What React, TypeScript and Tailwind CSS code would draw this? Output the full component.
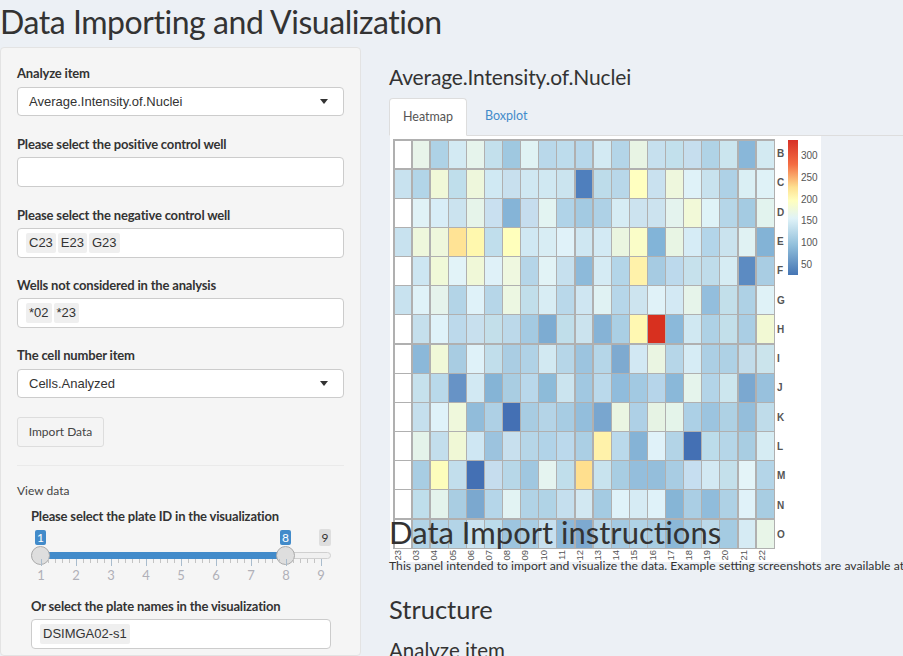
const HEAT: string[][] = [
  ['fff', 'e8f4ea', 'aed2e6', 'd3eaf3', 'e6f4ec', 'c3e0ec', '9fc8e0', 'e0f3f4', 'b9d8ea', 'bddcec', 'b7d7ea', 'd3eaf3', 'b4d5e8', 'e8f4e4', 'c6e0ee', 'c2e0ec', 'c6deee', 'b0d3e6', 'cbe5ee', '89b7d9', 'd3eaf2'],
  ['c8e2ef', 'b2d5e8', 'f0f8d8', 'bfdeeb', 'eef7dc', 'd0e9f3', 'c8e0ee', 'd0e8f2', 'd0e8f2', 'cbe4ef', '4f7fbd', 'bddcea', 'b8d7e9', 'ffffc0', 'c9e1ef', 'eef7dd', 'dff2f8', 'c8e2ee', 'aed1e6', 'daeff4', 'dff2f7'],
  ['fff', 'e0f2f6', 'd8edf7', 'cbe3ef', 'e6f4ea', 'c9e0f0', '85b4d7', 'c6ddee', 'e3f4f2', 'b0d3e8', 'a3cae2', 'aed1e6', 'd6ecf4', 'cce3ef', 'cce3ef', 'e4f3ee', 'f2f9d8', 'dff3f7', 'b5d6e8', 'a4cbe2', 'e2f3ee'],
  ['c8e2ef', 'eef7dc', 'eef7dc', 'ffe395', 'fff8ae', 'c0deec', 'ffffbc', 'd0e8f3', 'd8edf4', 'e0f2f9', 'cfe7f2', 'd3eaf4', 'eaf5e0', 'fafdc8', '82b4d8', 'e8f5e4', 'd6ecf6', 'b3d5e9', 'cae3ee', 'e0f2f3', '83b3d6'],
  ['fff', 'cde6f2', 'f0f9d8', 'e2f3f8', 'f0f8d8', 'dff1f8', 'eff8e0', 'b5d5e8', 'e2f3f6', 'c6e0ee', '8dbada', 'd5ebf4', 'b3d5e8', 'fff2aa', 'a6cbe2', 'bcd9ec', 'c6e1ec', 'bfdcea', 'd6ecf3', '5c8bc2', 'a9cde3'],
  ['c8e2ef', 'dff2f8', 'e5f3ec', 'b3d4e7', 'dff2f9', 'b6d6e8', 'ecf7e2', 'c1deea', 'd8edf4', 'b9d8ea', 'cfe6f2', 'e0f2f3', 'b6d6e9', 'cde4ef', 'e0f2f8', 'd3e9f4', 'e6f4ea', '93bedd', 'c2dfea', 'aed1e5', 'dff2f7'],
  ['fff', 'c5dfec', 'dff2f9', 'bcd9eb', 'c8e0ee', 'c3dfea', 'bcd9ea', 'a4cae2', '7dacd2', 'c0deea', 'cbe3ee', '86b3d6', 'aacfe4', 'fff8b2', 'd8301f', '8bb9da', 'd0e8f2', 'aed1e5', 'c2dfea', 'aacee4', 'f2f9d4'],
  ['fff', '8bb8d9', 'f0f8d8', 'a8cce2', 'dff2f9', 'c1deeb', 'aacde3', 'b0d2e6', 'd2e9f2', 'b6d6e8', '9cc4df', 'b5d6e8', '7eaad0', 'd2e8f3', 'eaf5e2', 'b6d6e8', 'd6ecf5', 'accfe4', 'aed1e5', 'c2dcea', 'cbe4ec'],
  ['fff', 'c6e1ec', 'b9d9ea', '6793c6', 'd2e9f3', '85b4d6', 'a9cde2', 'b9d8eb', '8dbbd9', 'cbe4ef', 'a1c8e1', 'bad9eb', '90bcdc', 'a2c9e2', 'b6d5ea', '8ab8d9', 'e5f4ec', 'b3d4e8', 'cce6ee', '7ba8d0', '98c1dd'],
  ['fff', 'c5dfed', 'dff2f9', 'eff8dc', '91bcda', 'aed0e5', '4470b4', 'a8cce2', 'b4d4e7', 'a7cce3', '93bedc', '79a6cf', 'eaf5e2', 'aed0e6', 'e6f3e4', 'e4f4ea', 'acd0e6', '9cc4df', 'aed1e4', '94bedb', 'bfdcea'],
  ['fff', 'e4f3ea', 'c3deec', 'f0f8d6', 'cfe7f3', '9cc3de', 'c8e0ee', 'b6d6e8', 'b1d3e8', 'bbd9ec', 'abcfe4', 'fff2aa', 'bad9eb', '85b3d6', 'e0f2f9', 'b3d4e7', '4470b4', 'bcdcea', 'b5d6e8', 'a8cde2', 'd6ecf3'],
  ['fff', 'a8cde3', 'fdfdbc', 'c2deec', '4470b4', 'c6ddee', 'b7d7e8', 'a0c7e0', 'e5f4f0', 'c0deeb', 'ffdf8e', 'c8e3ee', 'a8cde2', '94bedc', '94bedb', 'a8cce3', 'c6def0', 'd3e9f3', 'c4e0eb', 'e4f4f8', 'b4d5e8'],
  ['fff', 'bfdeeb', 'e4f3ec', 'a9cde2', '7ba8cf', 'b5d6e9', 'e2f3f3', 'b1d3e6', 'b0d3e6', 'c5dfee', 'd2e8f2', 'a4cbe2', 'dff2f9', 'd6ebf4', 'dff2f9', '86b5d6', 'aacee4', '90bcdb', 'aed1e5', 'e0f2f9', 'a8cde2'],
  ['fff', 'b3d4e7', 'b3d4e7', 'b3d4e7', 'cbe3f0', 'bcdcec', '9dc5df', 'a9cde3', 'c7e0ef', '8db9da', '7da9d0', 'b7d6e8', 'a4cae2', 'b0d3e6', 'a8cde3', '8bb8d8', 'a5cbe2', 'bcd9ea', 'a4cbe2', 'd6ebf4', 'e8f5e8'],
];

const ROWS = ['B', 'C', 'D', 'E', 'F', 'G', 'H', 'I', 'J', 'K', 'L', 'M', 'N', 'O'];
const COLS = ['23', '03', '04', '05', '06', '07', '08', '09', '10', '11', '12', '13', '14', '15', '16', '17', '18', '19', '20', '21', '22'];
const LEGEND = ['300', '250', '200', '150', '100', '50'];
const STEPS = [1, 2, 3, 4, 5, 6, 7, 8, 9];

const SANS = "font-['Lato','Noto_Sans',sans-serif]";
const ARIAL = "font-['Liberation_Sans',Arial,sans-serif]";

function Label({ children }: { children: string }) {
  return <div className="text-[13px] tracking-[-0.18px] leading-[18px] font-bold text-[#333] whitespace-nowrap">{children}</div>;
}

// selectize style box, chips or a single value
function SelectBox({ value }: { value: string }) {
  return (
    <div className={`mt-[5px] h-[29px] flex items-center justify-between pl-[11px] pr-[15px] bg-white border border-[#ccc] rounded-[4px] text-[13px] text-[#333] ${ARIAL}`}>
      <span>{value}</span>
      <svg width="8" height="5" viewBox="0 0 8 5"><path d="M0 0h8L4 5z" fill="#333" /></svg>
    </div>
  );
}

function ChipBox({ chips }: { chips: string[] }) {
  return (
    <div className={`mt-[4px] h-[30px] flex items-center gap-[2px] pl-[8px] bg-white border border-[#ccc] rounded-[4px] text-[13px] text-[#333] ${ARIAL}`}>
      {chips.map((c) => (
        <span key={c} className="h-[20px] leading-[20px] px-[3px] bg-[#efefef] rounded-[2px]">{c}</span>
      ))}
    </div>
  );
}

function PlateSlider() {
  return (
    <div className="relative h-[53px] mt-[4px] w-[300px]">
      {/* bubbles */}
      <span className={`absolute left-[4px] top-[1px] w-[11px] h-[15px] rounded-[2px] bg-[#428bca] text-white text-[12px] leading-[15px] text-center ${SANS}`}>1</span>
      <span className={`absolute left-[249px] top-[1px] w-[11px] h-[15px] rounded-[2px] bg-[#428bca] text-white text-[12px] leading-[15px] text-center ${SANS}`}>8</span>
      <span className={`absolute left-[288px] top-0 w-[12px] h-[17px] rounded-[2px] bg-[#dedede] text-[#333] text-[12px] leading-[17px] text-center ${SANS}`}>9</span>
      {/* track */}
      <div className="absolute left-0 right-0 top-[23px] h-[7px] rounded-[4px] bg-[#f0f0f0] border border-[#d0d0d0]" />
      <div className="absolute left-[10px] w-[245px] top-[23px] h-[7px] bg-[#428bca]" />
      <span className="absolute left-0 top-[17px] w-[19px] h-[19px] rounded-full bg-[#dedede] border border-[#aaa]" />
      <span className="absolute left-[245px] top-[17px] w-[19px] h-[19px] rounded-full bg-[#dedede] border border-[#aaa]" />
      {/* ticks */}
      <svg className="absolute left-0 top-[30px]" width="300" height="8">
        {Array.from({ length: 41 }, (_, i) => (
          <line key={i} x1={10.5 + i * 7} x2={10.5 + i * 7} y1="0" y2={i % 5 === 0 ? 7 : 4} stroke={i % 5 === 0 ? '#a9bccd' : '#c4c4c4'} />
        ))}
      </svg>
      <div className={`absolute left-[-7.5px] top-[38px] flex text-[13px] leading-[16px] text-[#b0b0b8] ${SANS}`}>
        {STEPS.map((s) => (
          <span key={s} className="w-[35px] text-center">{s}</span>
        ))}
      </div>
    </div>
  );
}

function Sidebar() {
  return (
    <aside className={`w-[361px] shrink-0 h-full bg-[#f5f5f5] border border-[#e3e3e3] rounded-[4px] pl-[16px] pr-[16px] pt-[16px] text-[#333] ${SANS}`}>
      <Label>Analyze item</Label>
      <SelectBox value="Average.Intensity.of.Nuclei" />
      <div className="mt-[19px]"><Label>Please select the positive control well</Label></div>
      <ChipBox chips={[]} />
      <div className="mt-[19px]"><Label>Please select the negative control well</Label></div>
      <ChipBox chips={['C23', 'E23', 'G23']} />
      <div className="mt-[18px]"><Label>Wells not considered in the analysis</Label></div>
      <ChipBox chips={['*02', '*23']} />
      <div className="mt-[18px]"><Label>The cell number item</Label></div>
      <SelectBox value="Cells.Analyzed" />
      <button className="block mt-[19px] h-[30px] w-[87px] bg-[#f4f4f4] border border-[#ddd] rounded-[3px] text-[12px] text-[#444]">Import Data</button>
      <div className="mt-[18px] border-t border-[#eaeaea]" />
      <div className="mt-[16px] text-[12px] leading-[18px] text-[#444]">View data</div>
      <div className="ml-[14px] mt-[7px] w-[300px]">
        <Label>Please select the plate ID in the visualization</Label>
        <PlateSlider />
        <div className="mt-[15px]"><Label>Or select the plate names in the visualization</Label></div>
        <ChipBox chips={['DSIMGA02-s1']} />
      </div>
    </aside>
  );
}

function Heatmap() {
  return (
    <div className={`w-[431px] h-[426px] bg-white pl-[3px] pt-[3px] ${ARIAL}`}>
      <div className="flex">
        <div className="w-[382px] h-[410px] grid grid-cols-[repeat(21,1fr)] grid-rows-[repeat(14,1fr)] gap-[1.25px] p-[1.5px] bg-[#b0b0b0]">
          {HEAT.flat().map((c, i) => (
            <div key={i} style={{ backgroundColor: `#${c}` }} />
          ))}
        </div>
        <div className="w-[14px] h-[410px] ml-[2px] grid grid-rows-[repeat(14,1fr)] text-[10px] font-bold text-[#555]">
          {ROWS.map((r) => (
            <span key={r} className="flex items-center">{r}</span>
          ))}
        </div>
        <div className="w-[10px] h-[135px] ml-[-3px] mt-[1px] bg-[linear-gradient(to_bottom,#d73027_0%,#f46d43_18%,#fee090_35%,#ffffbf_45%,#e0f3f8_58%,#91bfdb_78%,#4575b4_100%)]" />
        <div className="ml-[3px] h-[134px] pt-[9px] flex flex-col gap-[5.8px] text-[10px] leading-[16px] text-[#555]">
          {LEGEND.map((l) => (
            <span key={l}>{l}</span>
          ))}
        </div>
      </div>
      <div className="w-[382px] mt-[1px] grid grid-cols-[repeat(21,1fr)] text-[9.5px] text-[#555]">
        {COLS.map((c) => (
          <span key={c} className="mx-auto leading-[10px] [writing-mode:vertical-rl] rotate-180">{c}</span>
        ))}
      </div>
    </div>
  );
}

export default function App() {
  return (
    <div className={`w-[903px] h-screen overflow-hidden flex flex-col bg-[#ecf0f5] text-[#333] ${SANS}`}>
      <h1 className="h-[47px] text-[32px] tracking-[-0.45px] leading-[44px] whitespace-nowrap">Data Importing and Visualization</h1>
      <div className="flex-1 min-h-0 flex">
        <Sidebar />
        <main className="pl-[28px] w-[542px] shrink-0">
          <h3 className="mt-[17px] text-[21px] tracking-[-0.15px] leading-[26px] whitespace-nowrap">Average.Intensity.of.Nuclei</h3>
          <div className="mt-[8px] h-[38px] flex border-b border-[#ddd] w-[514px]">
            <div className="w-[78px] h-[38px] flex items-center justify-center bg-white border border-[#ddd] border-b-white rounded-t-[4px] text-[12.5px] text-[#555]">Heatmap</div>
            <div className="ml-[18px] h-[37px] flex items-center text-[12.5px] text-[#428bca]">Boxplot</div>
          </div>
          {/* plot output has a fixed height, the picture runs past it */}
          <div className="h-[380px] pl-[1px]">
            <Heatmap />
          </div>
          <h2 className="relative text-[31px] leading-[33px] whitespace-nowrap">Data Import instructions</h2>
          <p className="relative mt-[8px] text-[12.2px] leading-[18px] whitespace-nowrap">This panel intended to import and visualize the data. Example setting screenshots are available at</p>
          <h3 className="mt-[20px] text-[25.5px] leading-[28px]">Structure</h3>
          <h4 className="mt-[15px] text-[20.5px] leading-[24px]">Analyze item</h4>
        </main>
      </div>
    </div>
  );
}
